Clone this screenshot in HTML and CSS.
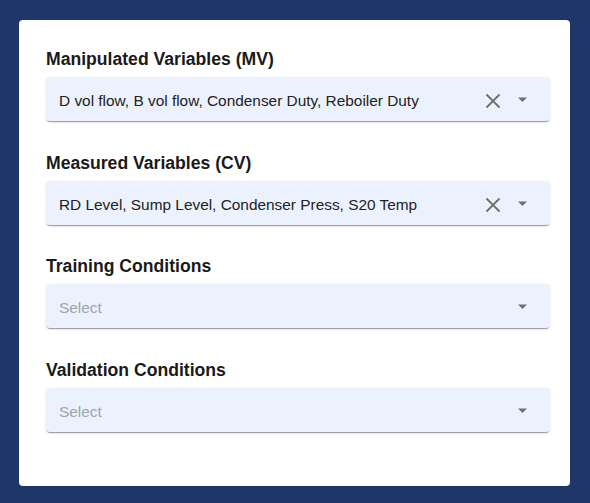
FILE: index.html
```html
<!DOCTYPE html>
<html>
<head>
<meta charset="utf-8">
<link rel="stylesheet" href="styles.css">
</head>
<body>
<div class="card">
  <div class="field">
    <div class="label">Manipulated Variables (MV)</div>
    <div class="select">
      <span class="value">D vol flow, B vol flow, Condenser Duty, Reboiler Duty</span>
      <svg class="clear" width="16" height="16" viewBox="0 0 16 16"><path d="M1.5 1.5 L14.5 14.5 M14.5 1.5 L1.5 14.5" stroke="#6e6e6e" stroke-width="1.8" fill="none"/></svg>
      <svg class="caret" width="9" height="5" viewBox="0 0 9 5"><path d="M0 0.5 L9 0.5 L4.5 5 Z" fill="#6e6e6e"/></svg>
    </div>
  </div>
  <div class="field">
    <div class="label">Measured Variables (CV)</div>
    <div class="select">
      <span class="value">RD Level, Sump Level, Condenser Press, S20 Temp</span>
      <svg class="clear" width="16" height="16" viewBox="0 0 16 16"><path d="M1.5 1.5 L14.5 14.5 M14.5 1.5 L1.5 14.5" stroke="#6e6e6e" stroke-width="1.8" fill="none"/></svg>
      <svg class="caret" width="9" height="5" viewBox="0 0 9 5"><path d="M0 0.5 L9 0.5 L4.5 5 Z" fill="#6e6e6e"/></svg>
    </div>
  </div>
  <div class="field">
    <div class="label">Training Conditions</div>
    <div class="select">
      <span class="value placeholder">Select</span>
      <svg class="caret" width="9" height="5" viewBox="0 0 9 5"><path d="M0 0.5 L9 0.5 L4.5 5 Z" fill="#6e6e6e"/></svg>
    </div>
  </div>
  <div class="field">
    <div class="label">Validation Conditions</div>
    <div class="select">
      <span class="value placeholder">Select</span>
      <svg class="caret" width="9" height="5" viewBox="0 0 9 5"><path d="M0 0.5 L9 0.5 L4.5 5 Z" fill="#6e6e6e"/></svg>
    </div>
  </div>
</div>
</body>
</html>
```
FILE: styles.css
```css
html, body {
  margin: 0;
  padding: 0;
}
body {
  background: #1f366b;
  padding: 20px 20px 17px 19px;
  font-family: "Liberation Sans", Arial, sans-serif;
}
.card {
  background: #ffffff;
  border-radius: 4px;
  padding: 29px 20px 22px 27px;
  height: 415px;
}
.field {
  margin-bottom: 32px;
}
.field:nth-child(3) {
  margin-top: -1px;
}
.label {
  font-size: 17.6px;
  font-weight: bold;
  line-height: 20px;
  color: #1a1a1a;
  margin-bottom: 8px;
}
.select {
  display: flex;
  align-items: center;
  height: 44px;
  background: #ecf2fd;
  border-radius: 4px;
  box-shadow: 0 2px 1px -1px rgba(0,0,0,0.35), 0 1px 3px rgba(0,0,0,0.12);
  padding: 3px 23px 0 13px;
  box-sizing: border-box;
}
.value {
  flex: 1;
  font-size: 15.4px;
  color: #222222;
}
.placeholder {
  color: #a0a4ab;
}
.clear {
  display: block;
  margin-right: 17px;
}
.caret {
  display: block;
  margin-top: -2px;
}
```
